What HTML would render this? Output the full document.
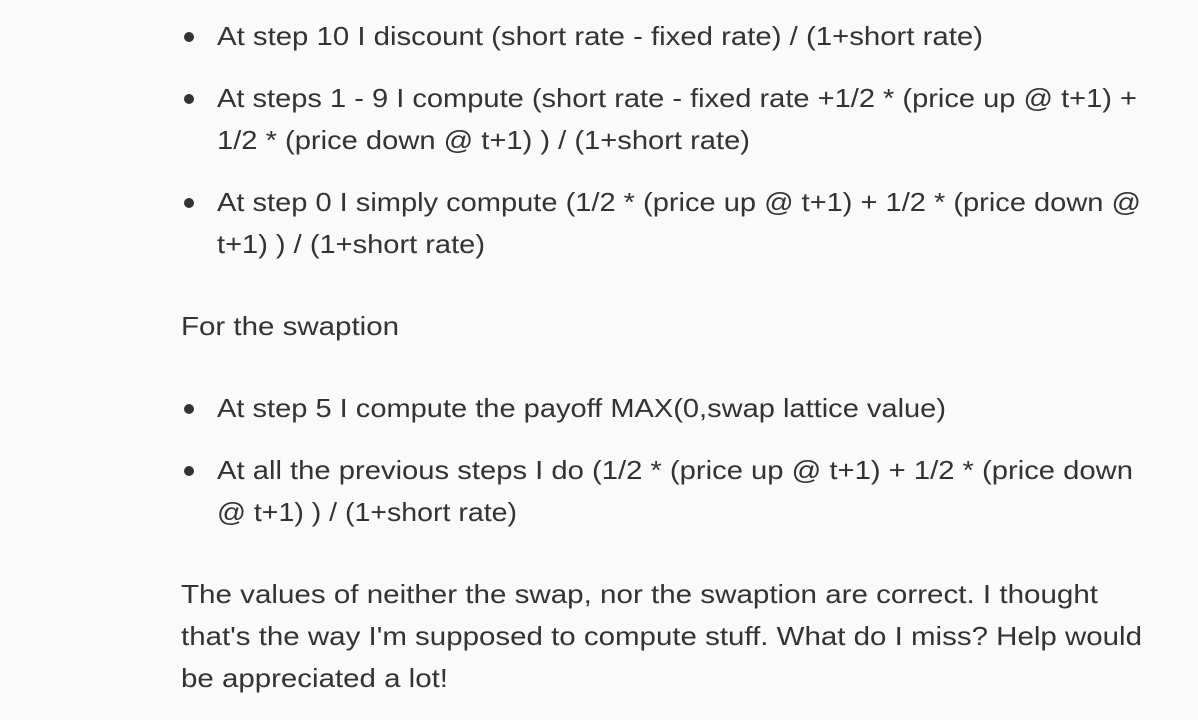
<!DOCTYPE html>
<html><head><meta charset="utf-8"><style>
html,body{margin:0;padding:0;background:#fafafa;width:1198px;height:720px;overflow:hidden;position:relative}
.l{position:absolute;font-family:"Liberation Sans",sans-serif;font-size:26px;line-height:42px;height:42px;color:#333;white-space:nowrap;transform-origin:0 0}
.b{position:absolute;width:10px;height:10px;border-radius:50%;background:#333;left:184px}
</style></head><body>
<div class="b" style="top:32px"></div>
<div class="l" style="left:217px;top:15px" data-w="766">At step 10 I discount (short rate - fixed rate) / (1+short rate)</div>
<div class="b" style="top:94px"></div>
<div class="l" style="left:217px;top:77px" data-w="920">At steps 1 - 9 I compute (short rate - fixed rate +1/2 * (price up @ t+1) +</div>
<div class="l" style="left:217px;top:119px" data-w="533">1/2 * (price down @ t+1) ) / (1+short rate)</div>
<div class="b" style="top:198px"></div>
<div class="l" style="left:217px;top:181px" data-w="924">At step 0 I simply compute (1/2 * (price up @ t+1) + 1/2 * (price down @</div>
<div class="l" style="left:217px;top:223px" data-w="268">t+1) ) / (1+short rate)</div>
<div class="l" style="left:181px;top:305px" data-w="218">For the swaption</div>
<div class="b" style="top:404px"></div>
<div class="l" style="left:217px;top:387px" data-w="729">At step 5 I compute the payoff MAX(0,swap lattice value)</div>
<div class="b" style="top:466px"></div>
<div class="l" style="left:217px;top:449px" data-w="916">At all the previous steps I do (1/2 * (price up @ t+1) + 1/2 * (price down</div>
<div class="l" style="left:217px;top:491px" data-w="300">@ t+1) ) / (1+short rate)</div>
<div class="l" style="left:181px;top:573px" data-w="917">The values of neither the swap, nor the swaption are correct. I thought</div>
<div class="l" style="left:181px;top:615px" data-w="961">that's the way I'm supposed to compute stuff. What do I miss? Help would</div>
<div class="l" style="left:181px;top:657px" data-w="267">be appreciated a lot!</div>
<script>
document.querySelectorAll('.l').forEach(function(e){var w=+e.dataset.w;var r=e.getBoundingClientRect().width;if(r>0)e.style.transform='scaleX('+(w/r)+')';});
</script>
</body></html>
